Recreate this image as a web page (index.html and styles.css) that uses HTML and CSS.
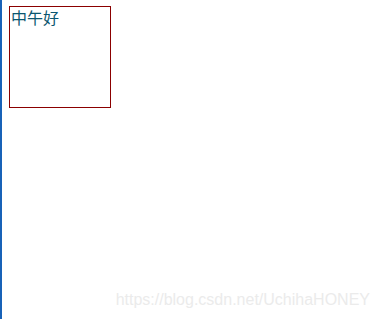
FILE: index.html
```html
<!DOCTYPE html>
<html lang="zh">
<head>
<meta charset="utf-8">
<link rel="stylesheet" href="styles.css">
</head>
<body>
<div class="page">
  <div class="box">中午好</div>
</div>
<div class="watermark">https://blog.csdn.net/UchihaHONEY</div>
</body>
</html>
```
FILE: styles.css
```css
html, body {
  margin: 0;
  padding: 0;
  height: 100%;
  background: #ffffff;
}
.page {
  box-sizing: border-box;
  height: 100%;
  border-left: 2px solid #1862b8;
  padding: 6px 0 0 7px;
}
.box {
  width: 100px;
  height: 100px;
  border: 1px solid #8b0000;
  font-family: "Microsoft YaHei", "Noto Sans CJK SC", sans-serif;
  font-size: 16px;
  line-height: 20px;
  color: #0b5670;
  padding: 0 0 0 1px;
  box-sizing: content-box;
  width: 99px;
}
.watermark {
  position: absolute;
  right: 10px;
  bottom: 10px;
  font-family: "Liberation Sans", Arial, sans-serif;
  font-size: 16px;
  line-height: 18px;
  color: #ebebeb;
}
```
